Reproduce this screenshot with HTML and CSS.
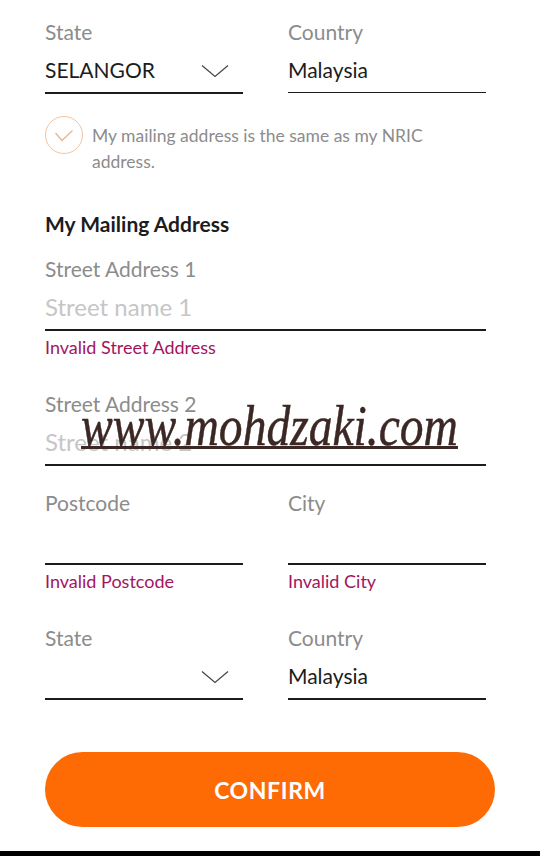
FILE: index.html
```html
<!DOCTYPE html>
<html lang="en">
<head>
<meta charset="utf-8">
<title>Mailing Address</title>
<link rel="stylesheet" href="styles.css">
</head>
<body>
<main class="form">
  <div class="row">
    <div class="field">
      <div class="label">State</div>
      <div class="control">
        <span class="value">SELANGOR</span>
        <svg class="chev" width="28" height="14" viewBox="0 0 28 14"><polyline points="1,1.5 14,12.5 27,1.5" fill="none" stroke="#444" stroke-width="1.2"/></svg>
      </div>
    </div>
    <div class="field">
      <div class="label">Country</div>
      <div class="control thin">
        <span class="value">Malaysia</span>
      </div>
    </div>
  </div>

  <div class="check">
    <span class="circle">
      <svg width="20" height="14" viewBox="0 0 20 14"><polyline points="1.5,4 8,11.5 18.5,1.5" fill="none" stroke="#eab48e" stroke-width="1.3"/></svg>
    </span>
    <p class="check-text">My mailing address is the same as my NRIC address.</p>
  </div>

  <h2 class="heading">My Mailing Address</h2>

  <div class="field street1">
    <div class="label">Street Address 1</div>
    <div class="control"><span class="placeholder">Street name 1</span></div>
    <div class="error">Invalid Street Address</div>
  </div>

  <div class="field after-error">
    <div class="label">Street Address 2</div>
    <div class="control"><span class="placeholder">Street name 2</span></div>
  </div>

  <div class="row after-field">
    <div class="field">
      <div class="label">Postcode</div>
      <div class="control"><span class="value"></span></div>
      <div class="error">Invalid Postcode</div>
    </div>
    <div class="field">
      <div class="label">City</div>
      <div class="control"><span class="value"></span></div>
      <div class="error">Invalid City</div>
    </div>
  </div>

  <div class="row after-error">
    <div class="field">
      <div class="label">State</div>
      <div class="control">
        <span class="value"></span>
        <svg class="chev" width="28" height="14" viewBox="0 0 28 14"><polyline points="1,1.5 14,12.5 27,1.5" fill="none" stroke="#444" stroke-width="1.2"/></svg>
      </div>
    </div>
    <div class="field">
      <div class="label">Country</div>
      <div class="control"><span class="value">Malaysia</span></div>
    </div>
  </div>

  <button class="confirm" type="button">CONFIRM</button>
</main>
<div class="bottom-bar"></div>
<div class="watermark">www.mohdzaki.com</div>
</body>
</html>
```

FILE: styles.css
```css
html, body {
  margin: 0;
  padding: 0;
  background: #ffffff;
}
body {
  width: 540px;
  height: 856px;
  overflow: hidden;
  position: relative;
  font-family: Lato, "Open Sans", "Liberation Sans", sans-serif;
}
.form {
  padding: 21px 0 0 45px;
  width: 441px;
}
.row {
  display: grid;
  grid-template-columns: 1fr 1fr;
  column-gap: 45px;
}
.label {
  font-size: 21px;
  line-height: 22px;
  color: #8c8c8c;
}
.control {
  height: 37px;
  padding-bottom: 12px;
  border-bottom: 2px solid #1c1c1c;
  display: flex;
  align-items: flex-end;
  justify-content: space-between;
}
.control.thin {
  border-bottom-width: 1.5px;
}
.value {
  font-size: 21px;
  line-height: 1;
  color: #1c1c1c;
}
.placeholder {
  font-size: 24px;
  line-height: 1;
  margin-bottom: -2px;
  color: #c6c6c6;
}
.chev {
  display: block;
  margin: 0 14px 0 0;
  position: relative;
  top: -2px;
}
.error {
  margin-top: 5px;
  font-size: 18px;
  line-height: 22px;
  color: #a3145f;
}
.check {
  margin-top: 22px;
  display: flex;
  align-items: flex-start;
  gap: 9px;
}
.circle {
  flex: none;
  width: 36px;
  height: 36px;
  border: 1.5px solid #f1c4a2;
  border-radius: 50%;
  display: flex;
  align-items: center;
  justify-content: center;
}
.circle svg {
  display: block;
  margin-top: 1px;
}
.check-text {
  margin: 7px 0 0 0;
  width: 360px;
  font-size: 17.5px;
  line-height: 26px;
  color: #8c8c8c;
}
.heading {
  margin: 36px 0 0 0;
  font-size: 21px;
  line-height: 25px;
  font-weight: 700;
  color: #1c1c1c;
}
.street1 {
  margin-top: 22px;
}
.after-error {
  margin-top: 35px;
}
.after-field {
  margin-top: 26px;
}
.confirm {
  display: block;
  margin-top: 52px;
  width: 450px;
  height: 75px;
  border: none;
  border-radius: 38px;
  background: #fe6a03;
  color: #ffffff;
  font-family: Lato, "Open Sans", "Liberation Sans", sans-serif;
  font-size: 23px;
  font-weight: 700;
  letter-spacing: 0.6px;
  padding: 0;
}
.bottom-bar {
  position: absolute;
  left: 0;
  right: 0;
  bottom: 0;
  height: 5px;
  background: #000000;
}
.watermark {
  position: absolute;
  left: 81px;
  top: 397px;
  font-family: "Liberation Serif", "DejaVu Serif", serif;
  font-style: italic;
  font-size: 58px;
  line-height: 58px;
  color: #3b2723;
  -webkit-text-stroke: 0.5px #3b2723;
  white-space: nowrap;
  transform: scaleX(0.82);
  transform-origin: 0 0;
  text-decoration: underline;
  text-decoration-thickness: 3px;
  text-underline-offset: 1px;
}
```
